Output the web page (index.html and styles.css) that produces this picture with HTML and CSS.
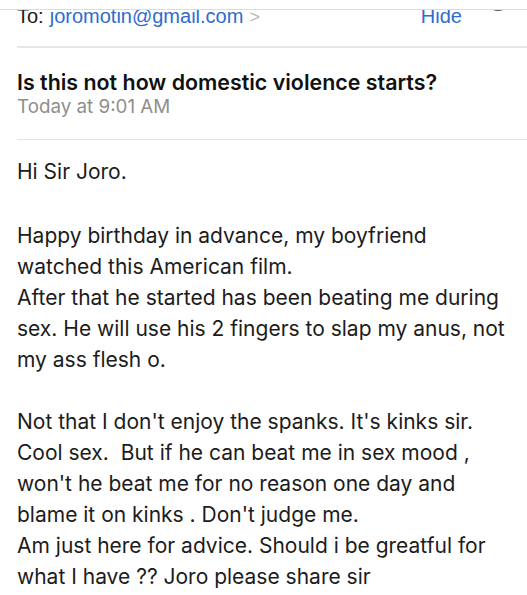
FILE: index.html
```html
<!DOCTYPE html>
<html>
<head>
<meta charset="utf-8">
<link rel="stylesheet" href="styles.css">
</head>
<body>
<div class="topbar"></div>
<div class="to-clip">
  <div class="to-row">
    <span class="to-label">To:</span>
    <span class="to-addr">joromotin@gmail.com</span>
    <span class="chev">&gt;</span>
    <span class="spacer"></span>
    <span class="hide">Hide</span>
  </div>
  <div class="circle"></div>
</div>
<div class="subject">
  <div class="title">Is this not how domestic violence starts?</div>
  <div class="date">Today at 9:01 AM</div>
</div>
<div class="body">
  <p class="greet">Hi Sir Joro.</p>
  <p>Happy birthday in advance, my boyfriend<br>watched this American film.<br>After that he started has been beating me during<br>sex. He will use his 2 fingers to slap my anus, not<br>my ass flesh o.</p>
  <p>Not that I don't enjoy the spanks. It's kinks sir.<br>Cool sex.&nbsp; But if he can beat me in sex mood ,<br>won't he beat me for no reason one day and<br>blame it on kinks . Don't judge me.<br>Am just here for advice. Should i be greatful for<br>what I have ?? Joro please share sir</p>
</div>
</body>
</html>
```
FILE: styles.css
```css
html, body {
  margin: 0;
  padding: 0;
  background: #fff;
}
body {
  font-family: Inter, "Liberation Sans", Arial, sans-serif;
  color: #1c1c1c;
  width: 527px;
  height: 595px;
  overflow: hidden;
}
.topbar {
  height: 9px;
  border-bottom: 1px solid #dcdcdc;
}
.to-clip {
  position: relative;
  height: 36px;
  overflow: hidden;
}
.to-row {
  display: flex;
  align-items: baseline;
  margin-top: -6px;
  padding-left: 17px;
  font-size: 20px;
  line-height: 24px;
  font-family: "Liberation Sans", Arial, sans-serif;
}
.to-label {
  color: #1c1c1c;
  margin-right: 6px;
}
.to-addr {
  color: #2f6bd0;
}
.chev {
  color: #b8b8b8;
  margin-left: 6px;
  font-size: 18px;
}
.spacer {
  flex: 1;
}
.hide {
  color: #2f6bd0;
  margin-right: 65px;
}
.circle {
  position: absolute;
  left: 486px;
  top: -23px;
  width: 20px;
  height: 20px;
  border: 2px solid #555;
  border-radius: 50%;
}
.subject {
  margin-left: 17px;
  border-top: 2px solid #e6e6e6;
  border-bottom: 1px solid #e2e2e2;
  padding: 21px 0 20px;
}
.title {
  font-weight: 600;
  font-size: 21.4px;
  line-height: 26px;
  color: #111;
}
.date {
  font-size: 18.8px;
  line-height: 24px;
  color: #8e8e8e;
}
.body {
  padding: 16px 0 0 17px;
  font-size: 21px;
  line-height: 31px;
}
.body p {
  margin: 0 0 31px;
}
.body .greet {
  margin-bottom: 33px;
}
```
